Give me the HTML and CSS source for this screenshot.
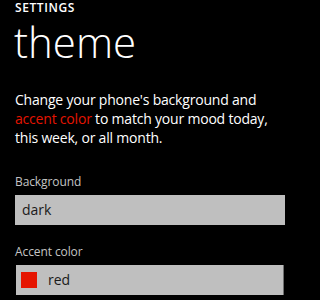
FILE: index.html
```html
<!DOCTYPE html>
<html>
<head>
<meta charset="utf-8">
<link rel="stylesheet" href="styles.css">
</head>
<body>
<div class="page">
  <div class="app-title">SETTINGS</div>
  <h1 class="page-title">theme</h1>
  <p class="desc">Change your phone's background and <span class="accent">accent color</span> to match your mood today, this week, or all month.</p>
  <div class="label">Background</div>
  <div class="picker"><span class="value">dark</span></div>
  <div class="label label-second">Accent color</div>
  <div class="picker picker-accent"><span class="swatch"></span><span class="value">red</span></div>
</div>
</body>
</html>
```
FILE: styles.css
```css
html, body {
  margin: 0;
  padding: 0;
  background: #000;
}
body {
  font-family: "Open Sans", "Noto Sans", sans-serif;
  color: #fff;
  width: 300px;
  height: 300px;
  overflow: hidden;
}
.page {
  padding: 0 15px;
}
.app-title {
  font-size: 12px;
  font-weight: 600;
  line-height: 16px;
  letter-spacing: 0.6px;
}
.page-title {
  margin: 0 0 0 -1px;
  font-size: 42px;
  font-weight: 300;
  line-height: 52px;
}
.desc {
  margin: 22px 0 0;
  font-size: 14px;
  line-height: 19px;
  letter-spacing: -0.2px;
}
.accent {
  color: #e51400;
}
.label {
  margin-top: 27px;
  font-size: 12px;
  line-height: 16px;
  letter-spacing: -0.1px;
  color: #c4c4c4;
}
.label-second {
  margin-top: 19px;
}
.picker {
  margin-top: 5px;
  height: 30px;
  background: #bfbfbf;
  color: #1a1a1a;
  display: flex;
  align-items: center;
  padding-left: 7px;
  font-size: 14px;
  line-height: 30px;
}
.picker-accent {
  margin: 5px 1px 0;
  padding-left: 5px;
  border-right: 1px solid #6e6e6e;
}
.swatch {
  width: 16px;
  height: 16px;
  background: #e51400;
  margin-right: 11px;
}
```
